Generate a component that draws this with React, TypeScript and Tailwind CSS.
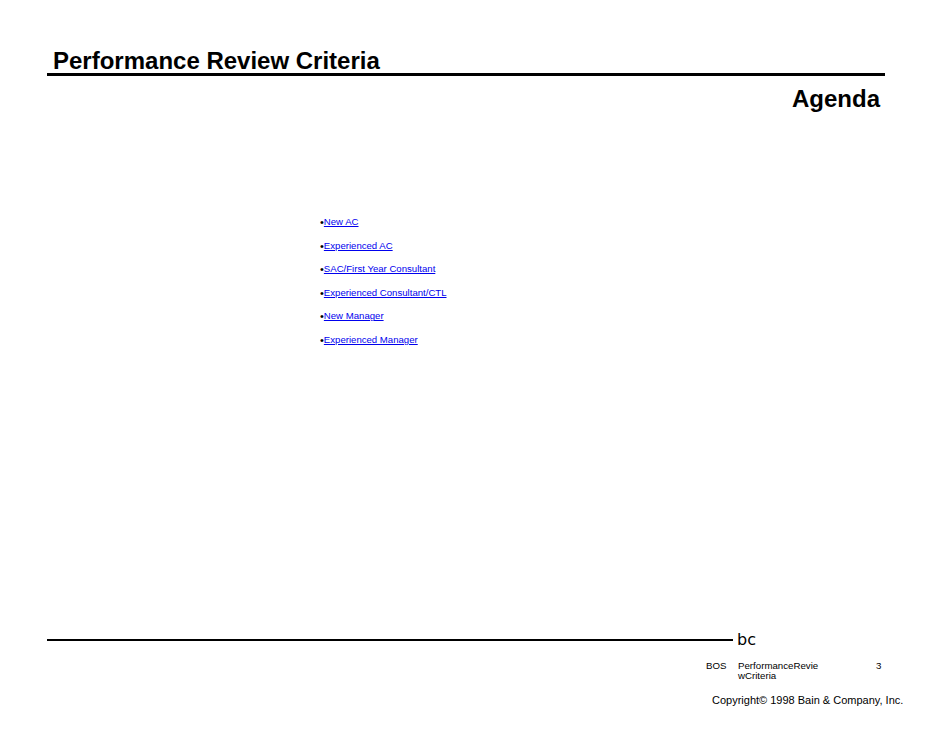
export default function App() {
  const items = ["New AC","Experienced AC","SAC/First Year Consultant","Experienced Consultant/CTL","New Manager","Experienced Manager"];
  return (
    <div className="w-[950px] h-[735px] bg-white text-black flex flex-col" style={{fontFamily:'"Liberation Sans", Arial, sans-serif'}}>
      <div className="ml-[47px] w-[838px] mt-[47px] border-b-[3px] border-black pl-[6px] h-[29px]">
        <div className="text-[24px] font-bold leading-[28px]">Performance Review Criteria</div>
      </div>
      <div className="w-[880px] text-right text-[24px] font-bold leading-[28px] mt-[9px]">Agenda</div>
      <div className="ml-[320px] mt-[103px] flex flex-col gap-[11.6px]">
        {items.map(t => (
          <div key={t} className="text-[9.6px] leading-[12px] flex items-center">
            <span className="text-[11px] leading-[12px]">•</span><span className="text-[#0000ee] underline">{t}</span>
          </div>
        ))}
      </div>
      <div className="mt-[285px] flex items-center">
        <div className="ml-[47px] w-[686px] h-[2px] bg-black"></div>
        <span className="ml-[4px] text-[16px] leading-[18px]" style={{fontFamily:'"DejaVu Sans", sans-serif'}}>bc</span>
      </div>
      <div className="ml-[706px] mt-[12px] flex text-[9.7px] leading-[10px]">
        <span className="w-[32px]">BOS</span>
        <span className="w-[84px]">PerformanceRevie<br/>wCriteria</span>
        <span className="ml-[54px]">3</span>
      </div>
      <div className="ml-[712px] mt-[13px] text-[11px] leading-[13px]">Copyright© 1998 Bain &amp; Company, Inc.</div>
    </div>
  );
}
